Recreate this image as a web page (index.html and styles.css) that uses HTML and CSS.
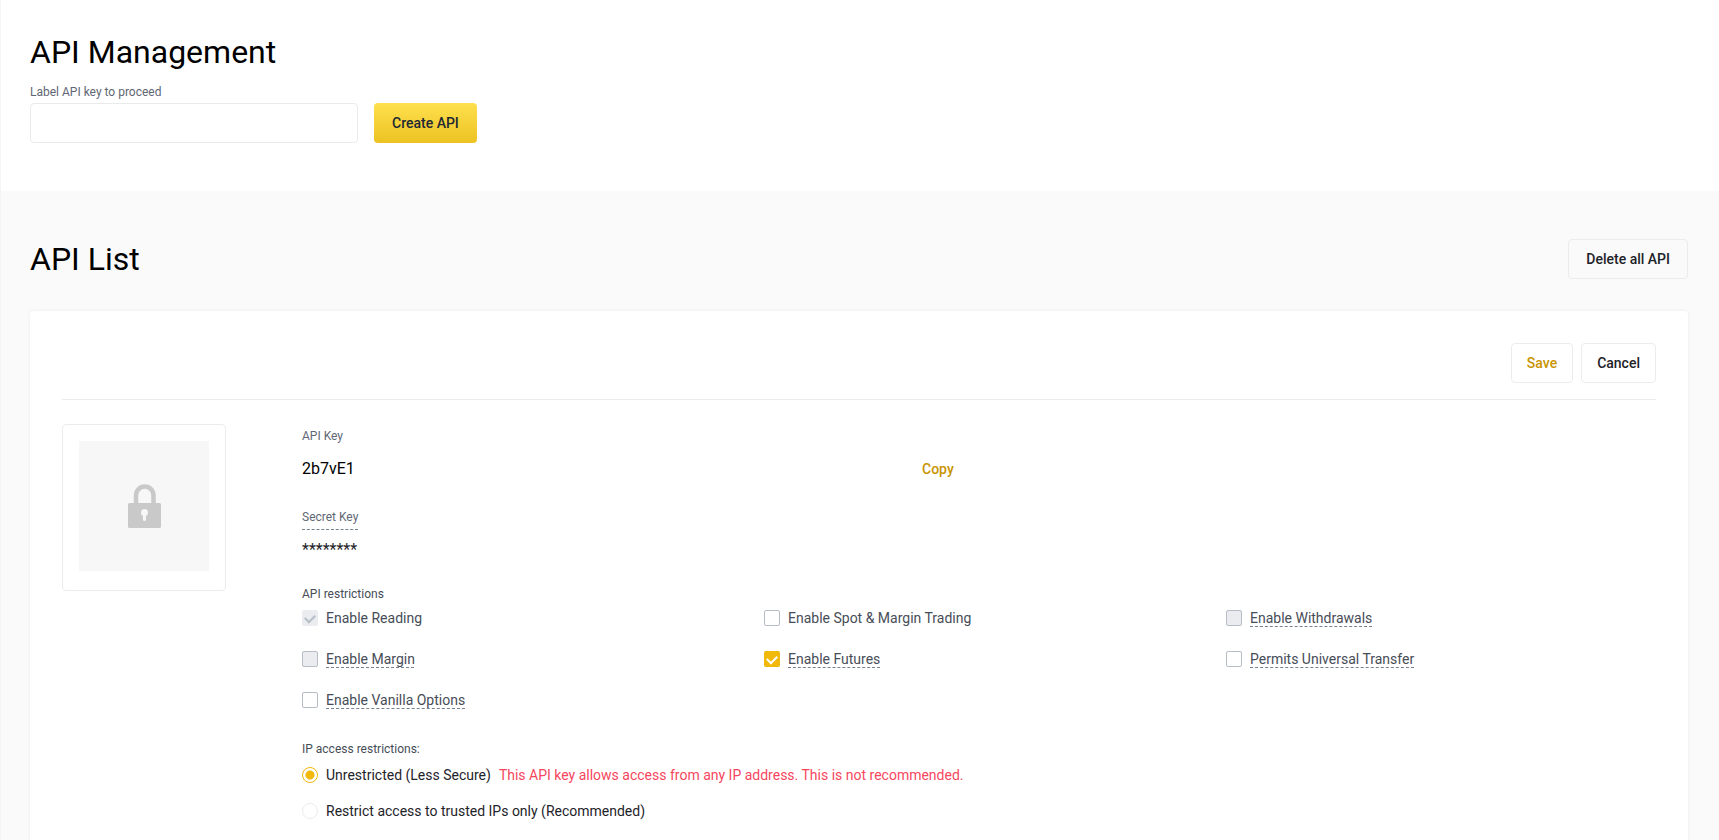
FILE: index.html
```html
<!DOCTYPE html>
<html lang="en">
<head>
<meta charset="utf-8">
<title>API Management</title>
<link rel="stylesheet" href="styles.css">
</head>
<body>
<main class="page">
  <section class="create">
    <h1 class="title">API Management</h1>
    <label class="caption create-label" for="api-label">Label API key to proceed</label>
    <form class="create-form">
      <input class="text-input" id="api-label" type="text">
      <button class="btn btn-primary" type="button">Create API</button>
    </form>
  </section>

  <section class="list">
    <header class="list-header">
      <h2 class="title">API List</h2>
      <button class="btn btn-wide" type="button">Delete all API</button>
    </header>

    <article class="card">
      <div class="card-actions">
        <button class="btn btn-accent" type="button">Save</button>
        <button class="btn" type="button">Cancel</button>
      </div>

      <div class="card-body">
        <div class="qr">
          <div class="qr-placeholder">
            <svg class="lock" viewBox="0 0 34 44" aria-hidden="true">
              <path d="M9 21V11.500a8.750 9 0 0 1 17.500 0V21" fill="none" stroke="#c9c9c9" stroke-width="4.500"/>
              <rect x="1" y="19" width="33" height="25" rx="1.500" fill="#c9c9c9"/>
              <circle cx="17.500" cy="28.500" r="3.500" fill="#f7f7f7"/>
              <path d="M16 29h3v6.500a1.500 1.500 0 0 1-3 0z" fill="#f7f7f7"/>
            </svg>
          </div>
        </div>

        <div class="details">
          <div class="caption">API Key</div>
          <div class="key-row">
            <span class="key">2b7vE1</span>
            <button class="copy" type="button">Copy</button>
          </div>
          <div class="caption secret-label">Secret Key</div>
          <div class="secret">********</div>

          <fieldset class="group">
            <legend class="caption caption-dark">API restrictions</legend>
            <div class="checks">
              <label class="option"><input class="check" type="checkbox" checked disabled><span>Enable Reading</span></label>
              <label class="option"><input class="check" type="checkbox"><span>Enable Spot &amp; Margin Trading</span></label>
              <label class="option"><input class="check" type="checkbox" disabled><span class="hint">Enable Withdrawals</span></label>
              <label class="option"><input class="check" type="checkbox" disabled><span class="hint">Enable Margin</span></label>
              <label class="option"><input class="check" type="checkbox" checked><span class="hint">Enable Futures</span></label>
              <label class="option"><input class="check" type="checkbox"><span class="hint">Permits Universal Transfer</span></label>
              <label class="option"><input class="check" type="checkbox"><span class="hint">Enable Vanilla Options</span></label>
            </div>
          </fieldset>

          <fieldset class="group group-ip">
            <legend class="caption caption-dark">IP access restrictions:</legend>
            <div class="radios">
              <label class="option option-dark"><input class="radio" type="radio" name="ip" checked><span>Unrestricted (Less Secure)</span><span class="warning">This API key allows access from any IP address. This is not recommended.</span></label>
              <label class="option option-dark"><input class="radio" type="radio" name="ip"><span>Restrict access to trusted IPs only (Recommended)</span></label>
            </div>
          </fieldset>
        </div>
      </div>
    </article>
  </section>
</main>
</body>
</html>
```

FILE: styles.css
```css
* {
  box-sizing: border-box;
}

body {
  margin: 0;
  background: #fafafa;
  color: #1e2329;
  font-family: Roboto, "Liberation Sans", sans-serif;
  font-size: 14px;
  line-height: 20px;
}

button,
input {
  font: inherit;
  color: inherit;
}

.page {
  min-height: 100vh;
  border-left: 1px solid #f5f5f5;
}

.title {
  margin: 0;
  color: #000;
  font-size: 32px;
  font-weight: 400;
  line-height: 40px;
}

.caption {
  color: #5f6774;
  font-size: 12px;
  line-height: 16px;
}

.caption-dark {
  color: #474d57;
}

.create {
  padding: 32px 30px 48px 29px;
  background: #fff;
}

.create .title {
  margin-bottom: 12px;
}

.create-label {
  display: block;
  margin-bottom: 3px;
}

.create-form {
  display: flex;
  gap: 16px;
}

.text-input {
  width: 328px;
  height: 40px;
  padding: 0 12px;
  border: 1px solid #eaeaea;
  border-radius: 4px;
  background: #fff;
}

.btn {
  height: 40px;
  padding: 0 15px;
  border: 1px solid #eaecef;
  border-radius: 4px;
  background: transparent;
  font-weight: 500;
}

.btn-wide {
  padding: 0 17px;
}

.btn-primary {
  padding: 0 18px;
  border: 0;
  background: linear-gradient(#fee04e, #edc222);
  color: #212833;
}

.btn-accent {
  color: #c99400;
}

.list {
  padding: 48px 31px 0 29px;
}

.list-header {
  display: flex;
  align-items: center;
  justify-content: space-between;
  margin-bottom: 32px;
}

.card {
  padding: 32px 32px 48px;
  border-radius: 4px;
  background: #fff;
  box-shadow: 0 0 4px rgba(0, 0, 0, 0.06);
}

.card-actions {
  display: flex;
  justify-content: flex-end;
  gap: 8px;
  padding-bottom: 16px;
  border-bottom: 1px solid #eaecef;
}

.card-body {
  display: flex;
  align-items: flex-start;
  gap: 76px;
  padding-top: 24px;
}

.qr {
  flex: none;
  padding: 16px 16px 19px;
  border: 1px solid #eaecef;
  border-radius: 4px;
}

.qr-placeholder {
  display: flex;
  align-items: center;
  justify-content: center;
  width: 130px;
  height: 130px;
  background: #f7f7f7;
}

.lock {
  width: 34px;
  height: 44px;
}

.details {
  flex: 1;
  padding-top: 4px;
}

.key-row {
  display: flex;
  align-items: center;
  margin: 15px 0 30px;
}

.key {
  flex: 0 0 620px;
  color: #000;
  font-size: 16px;
}

.copy {
  padding: 0;
  border: 0;
  background: none;
  color: #c99400;
  font-weight: 500;
}

.secret-label {
  width: fit-content;
  padding-bottom: 4px;
  border-bottom: 1px dashed #76808f;
}

.secret {
  margin-top: 10px;
  font-size: 16px;
}

.group {
  margin: 26px 0 0;
  padding: 0;
  border: 0;
}

.group-ip {
  margin-top: 31px;
}

.group legend {
  padding: 0;
}

.checks {
  display: grid;
  grid-template-columns: repeat(3, 1fr);
  gap: 21px 32px;
  padding-top: 6px;
}

.option {
  display: flex;
  align-items: center;
  gap: 8px;
  color: #474d57;
}

.option-dark {
  color: #1e2329;
}

.hint {
  text-decoration: underline dashed #76808f 1px;
  text-underline-offset: 3px;
}

.check,
.radio {
  flex: none;
  width: 16px;
  height: 16px;
  margin: 0;
  appearance: none;
  border: 1px solid #b7bdc6;
  border-radius: 2px;
  background: #fff;
}

.check:disabled {
  background: #eaecef;
}

.check:checked {
  display: grid;
  place-items: center;
  border: 0;
  background: #f0b90b;
  color: #fff;
}

.check:checked:disabled {
  background: #eaecef;
  color: #b7bdc6;
}

.check:checked::before {
  content: "";
  width: 8px;
  height: 5px;
  margin-bottom: 2px;
  border: solid currentColor;
  border-width: 0 0 2px 2px;
  transform: rotate(-45deg);
}

.radios {
  display: grid;
  gap: 16px;
  padding-top: 8px;
}

.radio {
  border-color: #eaecef;
  border-radius: 50%;
}

.radio:checked {
  border-color: #f0b90b;
  background: radial-gradient(circle, #f0b90b 4px, #fff 5px);
}

.warning {
  color: #f6465d;
}
```
